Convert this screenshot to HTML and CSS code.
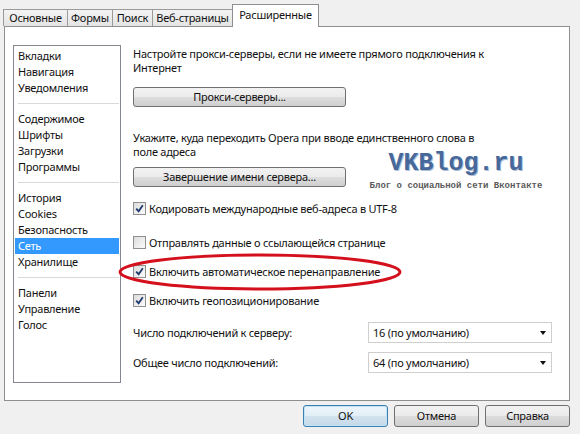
FILE: index.html
```html
<!DOCTYPE html>
<html lang="ru">
<head>
<meta charset="utf-8">
<title>Настройки</title>
<link rel="stylesheet" href="styles.css">
</head>
<body>
<div class="window">
  <div class="tabs">
    <div class="tab t1">Основные</div>
    <div class="tab t2">Формы</div>
    <div class="tab t3">Поиск</div>
    <div class="tab t4">Веб-страницы</div>
    <div class="tab t5 active">Расширенные</div>
  </div>
  <div class="panel">
    <ul class="list">
      <li>Вкладки</li>
      <li>Навигация</li>
      <li>Уведомления</li>
      <li class="sep"></li>
      <li>Содержимое</li>
      <li>Шрифты</li>
      <li>Загрузки</li>
      <li>Программы</li>
      <li class="sep"></li>
      <li>История</li>
      <li>Cookies</li>
      <li>Безопасность</li>
      <li class="selected">Сеть</li>
      <li>Хранилище</li>
      <li class="sep"></li>
      <li>Панели</li>
      <li>Управление</li>
      <li>Голос</li>
    </ul>
    <div class="content">
      <p class="desc d1">Настройте прокси-серверы, если не имеете прямого подключения к<br>Интернет</p>
      <button class="btn wide b1">Прокси-серверы...</button>
      <p class="desc d2">Укажите, куда переходить Opera при вводе единственного слова в<br>поле адреса</p>
      <button class="btn wide b2">Завершение имени сервера...</button>
      <label class="check c1"><span class="box"><svg viewBox="0 0 9 9" class="mark"><path d="M1.2 4.6 L3.6 7.2 L7.8 1.2"/></svg></span>Кодировать международные веб-адреса в UTF-8</label>
      <label class="check c2"><span class="box"></span>Отправлять данные о ссылающейся странице</label>
      <label class="check c3"><span class="box"><svg viewBox="0 0 9 9" class="mark"><path d="M1.2 4.6 L3.6 7.2 L7.8 1.2"/></svg></span>Включить автоматическое перенаправление</label>
      <label class="check c3"><span class="box"><svg viewBox="0 0 9 9" class="mark"><path d="M1.2 4.6 L3.6 7.2 L7.8 1.2"/></svg></span>Включить геопозиционирование</label>
      <div class="field f1"><span>Число подключений к серверу:</span><div class="select">16 (по умолчанию)<span class="arrow"></span></div></div>
      <div class="field f2"><span>Общее число подключений:</span><div class="select">64 (по умолчанию)<span class="arrow"></span></div></div>
    </div>
  </div>
  <div class="footer">
    <button class="btn foot default">OK</button>
    <button class="btn foot">Отмена</button>
    <button class="btn foot">Справка</button>
  </div>

  <div class="watermark">
    <div class="wm-title">VKBlog.ru</div>
    <div class="wm-sub">Блог о социальной сети Вконтакте</div>
  </div>
  <svg class="circle" width="290" height="42" viewBox="0 0 290 42"><ellipse cx="143" cy="20" rx="140" ry="17"/></svg>
</div>
</body>
</html>
```
FILE: styles.css
```css
* { box-sizing: border-box; }
html, body { margin: 0; padding: 0; }
body {
  width: 580px;
  height: 434px;
  background: #f0f0f0;
  font-family: "Noto Sans", "Open Sans", sans-serif;
  font-size: 11px;
  letter-spacing: -0.25px;
  color: #111;
  overflow: hidden;
}
.window { position: relative; width: 580px; height: 434px; }

.tabs {
  display: flex;
  align-items: flex-end;
  height: 26px;
  padding-left: 3px;
}
.tab {
  height: 17px;
  line-height: 15px;
  padding: 0;
  text-align: center;
  border: 1px solid #9a9a9a;
  border-bottom: none;
  background: linear-gradient(#f3f3f3, #e4e4e4);
  margin-right: -1px;
  white-space: nowrap;
  flex: none;
}
.t1 { width: 65px; }
.t2 { width: 46px; }
.t3 { width: 41px; }
.t4 { width: 81px; }
.t5 { width: 87px; }
.tab.active {
  height: 23px;
  line-height: 20px;
  background: #fff;
  margin-bottom: -1px;
  position: relative;
  z-index: 2;
  border-color: #8e8f8f;
}

.panel {
  display: flex;
  margin-left: 4px;
  width: 566px;
  height: 375px;
  border: 1px solid #8e8f8f;
  background: #fff;
  padding: 18px 17px 16px 8px;
}

.list {
  list-style: none;
  margin: 0;
  padding: 2px 0 0;
  width: 108px;
  flex: none;
  height: 338px;
  border: 1px solid #828790;
}
.list li {
  height: 16px;
  line-height: 16px;
  padding-left: 3px;
  margin: 0 1px;
  white-space: nowrap;
}
.list li.sep {
  height: 15px;
  display: flex;
  align-items: center;
}
.list li.sep::after {
  content: "";
  flex: 1;
  height: 1px;
  background: #d9d9d9;
}
.list li.selected {
  background: #3399ff;
  color: #fff;
}

.content {
  flex: 1;
  margin-left: 12px;
  display: flex;
  flex-direction: column;
  align-items: flex-start;
}
.desc {
  margin: 0;
  line-height: 14px;
  white-space: nowrap;
}
.d1 { margin-top: 2px; }
.d2 { margin-top: 24px; }

.btn {
  font: inherit;
  letter-spacing: inherit;
  color: #111;
  border: 1px solid #707070;
  border-radius: 3px;
  background: linear-gradient(#f2f2f2 0%, #ebebeb 48%, #dddddd 52%, #cfcfcf 100%);
  padding: 0;
  text-align: center;
}
.wide { width: 213px; height: 20px; line-height: 16px; }
.b1 { margin-top: 12px; }
.b2 { margin-top: 8px; }

.check {
  display: flex;
  align-items: center;
  height: 16px;
  white-space: nowrap;
}
.c1 { margin-top: 13px; }
.c2 { margin-top: 18px; }
.c3 { margin-top: 13px; }
.box {
  width: 13px;
  height: 13px;
  margin-right: 3px;
  border: 1px solid #8f8f8f;
  background: linear-gradient(135deg, #dcdcdc, #fbfbfb);
  display: flex;
  align-items: center;
  justify-content: center;
}
.mark { width: 9px; height: 9px; }
.mark path { fill: none; stroke: #1f3a6e; stroke-width: 1.8; }

.field {
  display: flex;
  align-items: center;
  justify-content: space-between;
  width: 100%;
  height: 21px;
}
.f1 { margin-top: 14px; }
.f2 { margin-top: 9px; }
.select {
  width: 184px;
  height: 21px;
  border: 1px solid #cfcfcf;
  background: #fff;
  padding-left: 4px;
  line-height: 19px;
  display: flex;
  justify-content: space-between;
  align-items: center;
  padding-right: 5px;
}
.arrow {
  width: 0;
  height: 0;
  border-left: 3.5px solid transparent;
  border-right: 3.5px solid transparent;
  border-top: 4px solid #111;
}

.footer {
  display: flex;
  justify-content: flex-end;
  gap: 6px;
  width: 570px;
  margin-top: 4px;
}
.foot { width: 85px; height: 22px; line-height: 18px; }
.foot.default {
  border-color: #3c7fb1;
  background: linear-gradient(#eef6fb 0%, #e2eef6 48%, #d2e2ee 52%, #c6d9e8 100%);
  box-shadow: inset 0 0 0 1px #bfe3f7;
}

.watermark {
  position: absolute;
  left: 368px;
  top: 151px;
  width: 176px;
  text-align: center;
  letter-spacing: 0;
}
.wm-title {
  font-family: "Liberation Mono", monospace;
  font-weight: bold;
  font-size: 25px;
  line-height: 26px;
  color: #46689a;
  text-shadow: 1px 1px 0 #aebfd6;
}
.wm-sub {
  font-family: "Liberation Mono", monospace;
  font-weight: bold;
  font-size: 9px;
  line-height: 12px;
  color: #5a5a5a;
  margin-top: 3px;
}
.circle {
  position: absolute;
  left: 117px;
  top: 252px;
}
.circle ellipse { fill: none; stroke: #d4101c; stroke-width: 3; }
```
